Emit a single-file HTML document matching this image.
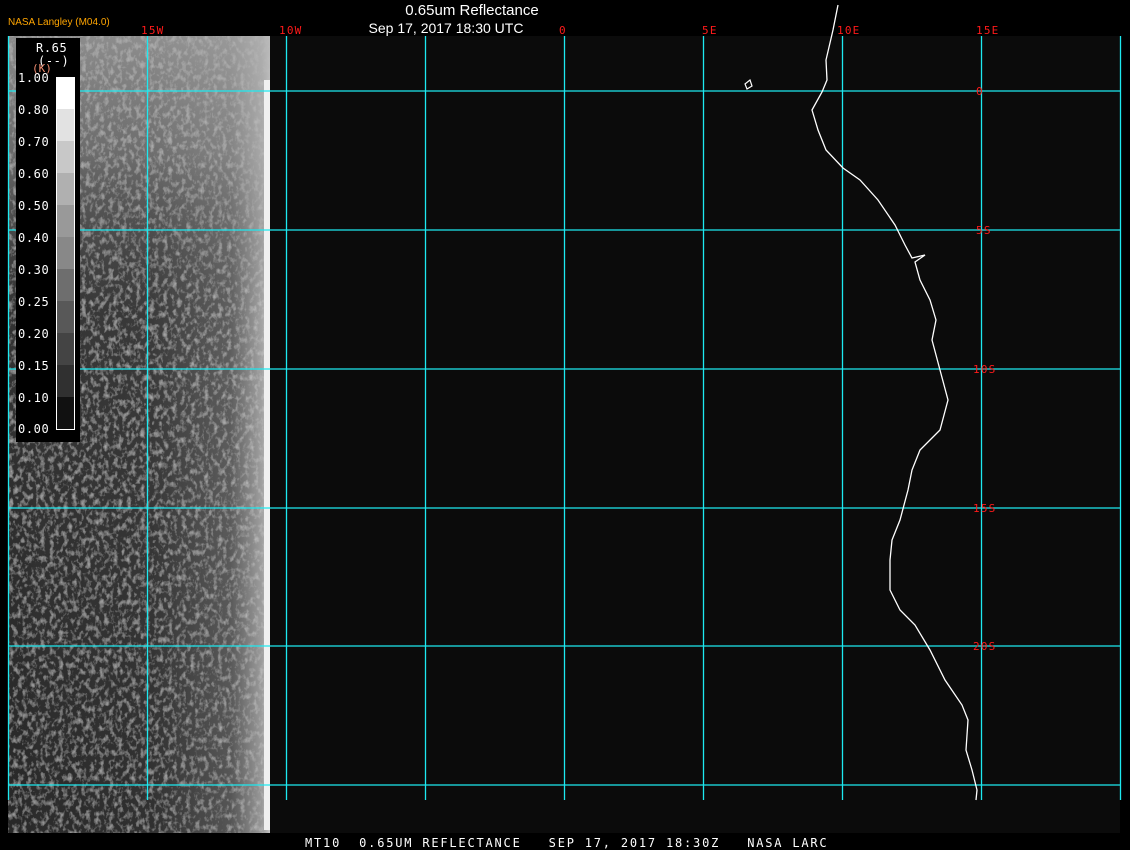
<!DOCTYPE html>
<html><head><meta charset="utf-8"><style>
html,body{margin:0;padding:0;background:#000;width:1130px;height:850px;overflow:hidden}
svg{display:block}
.m{font-family:"DejaVu Sans Mono","Liberation Mono",monospace}
.s{font-family:"Liberation Sans",sans-serif}
</style></head><body>
<svg width="1130" height="850" viewBox="0 0 1130 850" xmlns="http://www.w3.org/2000/svg">
<defs>
<filter id="tx" x="0" y="0" width="100%" height="100%">
<feTurbulence type="fractalNoise" baseFrequency="0.22 0.16" numOctaves="3" seed="4" result="n"/>
<feColorMatrix in="n" type="matrix" values="0 0 0 0 0  0 0 0 0 0  0 0 0 0 0  2.2 0 0 0 -1.05" result="a"/>
<feFlood flood-color="#ffffff" flood-opacity="0.55" result="w"/>
<feComposite in="w" in2="a" operator="in" result="wn"/>
<feComposite in="wn" in2="SourceGraphic" operator="atop"/>
</filter>
<linearGradient id="hx" x1="0" x2="1" y1="0" y2="0">
<stop offset="0" stop-color="#2e2e2e"/><stop offset="0.55" stop-color="#383838"/><stop offset="0.85" stop-color="#666"/><stop offset="0.97" stop-color="#bbb"/><stop offset="1" stop-color="#eee"/>
</linearGradient>
<linearGradient id="vy" x1="0" x2="0" y1="0" y2="1">
<stop offset="0" stop-color="#aaa" stop-opacity="0.75"/><stop offset="0.15" stop-color="#999" stop-opacity="0.55"/><stop offset="0.35" stop-color="#444" stop-opacity="0.2"/><stop offset="1" stop-color="#111" stop-opacity="0.2"/>
</linearGradient>
</defs>
<rect x="8" y="36" width="1112" height="797" fill="#0b0b0b"/>
<g filter="url(#tx)">
<rect x="8" y="36" width="262" height="797" fill="url(#hx)"/>
</g>
<rect x="8" y="36" width="262" height="797" fill="url(#vy)"/>
<rect x="264" y="80" width="6" height="750" fill="#f0f0f0"/>
<g stroke="#1de9f0" stroke-width="1.3">
<line x1="8" y1="91" x2="1120" y2="91"/><line x1="8" y1="230" x2="1120" y2="230"/><line x1="8" y1="369" x2="1120" y2="369"/><line x1="8" y1="508" x2="1120" y2="508"/><line x1="8" y1="646" x2="1120" y2="646"/><line x1="8" y1="785" x2="1120" y2="785"/>
<line x1="8.5" y1="36" x2="8.5" y2="800"/><line x1="147.5" y1="36" x2="147.5" y2="800"/><line x1="286.5" y1="36" x2="286.5" y2="800"/><line x1="425.5" y1="36" x2="425.5" y2="800"/><line x1="564.5" y1="36" x2="564.5" y2="800"/><line x1="703.5" y1="36" x2="703.5" y2="800"/><line x1="842.5" y1="36" x2="842.5" y2="800"/><line x1="981.5" y1="36" x2="981.5" y2="800"/><line x1="1120.5" y1="36" x2="1120.5" y2="800"/>
</g>
<polyline fill="none" stroke="#fff" stroke-width="1.3" points="838,5 833,30 826,60 827,80 822,92 812,110 818,130 826,150 843,168 860,180 878,200 895,225 905,245 912,258 925,255 915,262 920,280 930,300 936,320 932,340 940,370 948,400 940,430 920,450 912,470 908,490 900,520 892,540 890,560 890,590 900,610 915,625 930,650 945,680 962,705 968,720 966,750 972,770 977,790 976,800"/>
<polygon points="745,84 750,80 752,86 747,89" fill="none" stroke="#fff" stroke-width="1.2"/>
<rect x="16" y="38" width="64" height="404" fill="#000"/>
<g>
<rect x="56" y="77" width="19" height="32" fill="#fff"/>
<rect x="56" y="109" width="19" height="32" fill="#e2e2e2"/>
<rect x="56" y="141" width="19" height="32" fill="#c8c8c8"/>
<rect x="56" y="173" width="19" height="32" fill="#b0b0b0"/>
<rect x="56" y="205" width="19" height="32" fill="#999"/>
<rect x="56" y="237" width="19" height="32" fill="#888"/>
<rect x="56" y="269" width="19" height="32" fill="#6e6e6e"/>
<rect x="56" y="301" width="19" height="32" fill="#585858"/>
<rect x="56" y="333" width="19" height="32" fill="#444"/>
<rect x="56" y="365" width="19" height="32" fill="#303030"/>
<rect x="56" y="397" width="19" height="33" fill="#111"/>
<rect x="56.5" y="77.5" width="18" height="352" fill="none" stroke="#fff"/>
</g>
<g fill="#fff" font-size="12" class="m" letter-spacing="0.6">
<text x="36" y="52">R.65</text><text x="38" y="65">(--)</text>
<text x="18" y="82">1.00</text><text x="18" y="114">0.80</text><text x="18" y="146">0.70</text><text x="18" y="178">0.60</text><text x="18" y="210">0.50</text><text x="18" y="242">0.40</text><text x="18" y="274">0.30</text><text x="18" y="306">0.25</text><text x="18" y="338">0.20</text><text x="18" y="370">0.15</text><text x="18" y="402">0.10</text><text x="18" y="433">0.00</text>
</g>
<text x="32" y="72" fill="#f08c70" font-size="11" class="m">(K)</text>
<text x="8" y="25" fill="#ffa500" font-size="10" class="s">NASA Langley (M04.0)</text>
<text x="472" y="15" fill="#fff" font-size="15" text-anchor="middle" class="s">0.65um Reflectance</text>
<g fill="#ff1a1a" font-size="11" class="m" letter-spacing="1.2">
<text x="141" y="34">15W</text><text x="279" y="34">10W</text><text x="418" y="34">5W</text><text x="559" y="34">0</text><text x="702" y="34">5E</text><text x="837" y="34">10E</text><text x="976" y="34">15E</text>
<text x="976" y="95">0</text><text x="976" y="234">5S</text><text x="973" y="373">10S</text><text x="973" y="512">15S</text><text x="973" y="650">20S</text>
</g>
<rect x="368" y="18" width="160" height="17" fill="#000"/>
<text x="446" y="33" fill="#fff" font-size="14" text-anchor="middle" class="s">Sep 17, 2017 18:30 UTC</text>
<text x="305" y="847" fill="#fff" font-size="12" class="m" letter-spacing="1.8" xml:space="preserve">MT10  0.65UM REFLECTANCE   SEP 17, 2017 18:30Z   NASA LARC</text>
</svg>
</body></html>
